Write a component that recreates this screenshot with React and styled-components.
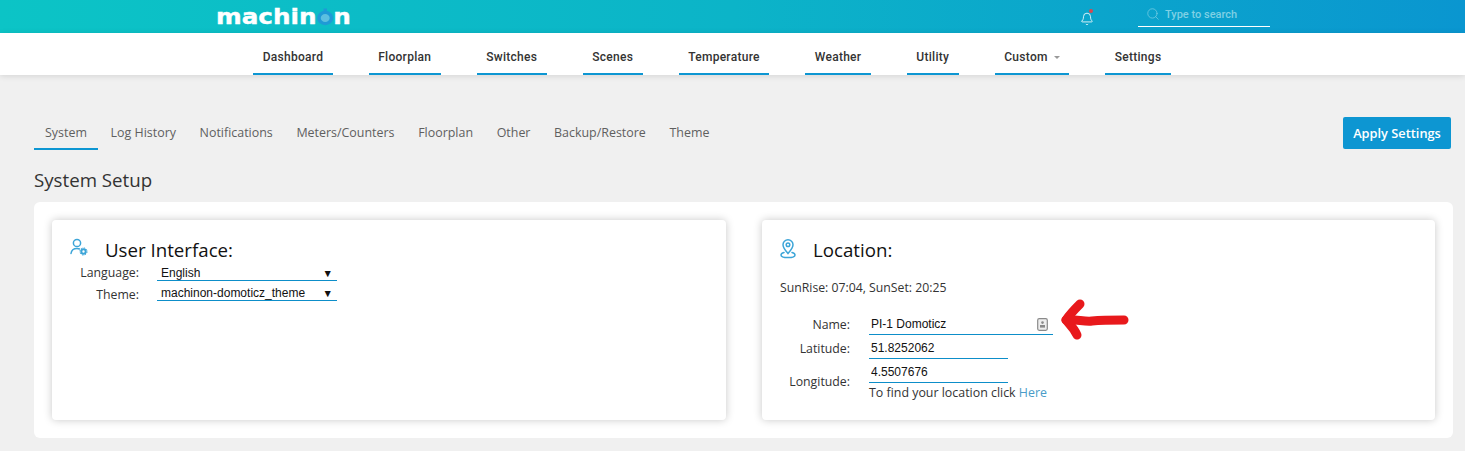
import React from 'react';
import styled, { createGlobalStyle } from 'styled-components';
import { Bell, Search } from 'lucide-react';

const GlobalStyle = createGlobalStyle`
  html, body {
    margin: 0;
    padding: 0;
    background: #f0f0f0;
    font-family: "Open Sans", sans-serif;
  }
`;

const Header = styled.header`
  height: 33px;
  display: flex;
  align-items: center;
  padding-left: 217px;
  background: linear-gradient(90deg, #0cc4c6 0%, #0cb4c8 50%, #0a96d0 100%);
`;

const Logo = styled.div`
  width: 135px;
  display: flex;
  align-items: center;
  height: 33px;
  margin-left: -1px;
  margin-right: 1px;
  color: #fff;
  font-family: "DejaVu Sans", sans-serif;
  font-weight: 700;
  font-size: 22px;
  line-height: 33px;
  -webkit-text-stroke: 0.4px #fff;
  transform: scaleX(1.12);
  transform-origin: left center;
`;

const LogoRing = styled.svg`
  width: 15px;
  height: 22px;
  flex: none;
`;

const BellWrap = styled.div`
  position: relative;
  width: 14px;
  height: 16px;
  margin-left: 728px;
  color: #fff;
  margin-top: 1px;
`;

const BellDot = styled.span`
  position: absolute;
  top: 0;
  right: 1px;
  width: 4px;
  height: 4px;
  border-radius: 50%;
  background: #d9484f;
`;

const SearchBox = styled.div`
  width: 132px;
  height: 27px;
  margin-left: 44px;
  box-sizing: border-box;
  padding: 2px 0 0 8px;
  display: flex;
  align-items: center;
  gap: 5px;
  border-bottom: 1px solid #fff;
  align-self: flex-start;
  color: #7fd0e4;
  font-family: "Roboto", sans-serif;
  font-size: 11px;
  font-weight: 500;
`;

const Nav = styled.nav`
  height: 42px;
  background: #fff;
  box-shadow: 0 1px 6px rgba(0, 0, 0, 0.12);
  display: flex;
  justify-content: center;
  gap: 36px;
  box-sizing: border-box;
  padding-right: 41px;
`;

const NavItem = styled.a`
  box-sizing: border-box;
  height: 42px;
  padding: 17px 9.5px 0;
  border-bottom: 2px solid #0d96d2;
  color: #333;
  font-family: "Roboto", sans-serif;
  font-weight: 500;
  font-size: 12px;
  letter-spacing: 0.28px;
  white-space: nowrap;
`;

const Caret = styled.span`
  display: inline-block;
  margin-left: 6px;
  vertical-align: 2px;
  border-left: 3.5px solid transparent;
  border-right: 3.5px solid transparent;
  border-top: 3px solid #999;
`;

const Main = styled.main`
  padding: 42px 12px 13px 34px;
`;

const TabBar = styled.div`
  display: flex;
  align-items: flex-start;
  height: 33px;
  padding-right: 2px;
`;

const Tab = styled.a`
  box-sizing: border-box;
  height: 33px;
  padding: 7px 11px 0;
  margin-right: 1.6px;
  font-size: 12.45px;
  font-weight: 500;
  color: #5f5f5f;
  white-space: nowrap;
  border-bottom: 2px solid ${props => (props.$active ? '#0d96d2' : 'transparent')};
`;

const ApplyButton = styled.button`
  margin-left: auto;
  width: 108px;
  height: 32px;
  border: 0;
  border-radius: 2px;
  background: #0d96d2;
  color: #fff;
  font-family: "Open Sans", sans-serif;
  font-size: 12.8px;
  font-weight: 600;
`;

const PageTitle = styled.h2`
  margin: 18px 0 10px;
  font-size: 18.7px;
  line-height: 24px;
  font-weight: 400;
  color: #333;
`;

const Panel = styled.section`
  background: #fff;
  border-radius: 6px;
  padding: 18px;
  display: grid;
  grid-template-columns: 674px 673px;
  column-gap: 36px;
`;

const Card = styled.div`
  height: 200px;
  box-sizing: border-box;
  background: #fff;
  border-radius: 4px;
  box-shadow: 0 0 8px rgba(0, 0, 0, 0.22);
  padding: 18px 18px 0;
`;

const CardHead = styled.div`
  display: flex;
  align-items: flex-start;
  height: ${props => props.$height}px;
`;

const CardIcon = styled.svg`
  flex: none;
  width: ${props => props.$width}px;
  height: 22px;
  color: #3da5d8;
`;

const CardTitle = styled.h3`
  margin: 0 0 0 17px;
  font-size: 18.7px;
  line-height: 24px;
  font-weight: 400;
  color: #111;
`;

const FieldRow = styled.div`
  display: flex;
  align-items: flex-end;
  height: ${props => props.$height}px;
  position: relative;
`;

const FieldLabel = styled.label`
  width: ${props => props.$width}px;
  margin-bottom: ${props => -(props.$drop || 0)}px;
  text-align: right;
  flex: none;
  font-size: 12.3px;
  line-height: 17px;
  color: #333;
`;

const SelectBox = styled.div`
  box-sizing: border-box;
  width: 180px;
  height: 17px;
  margin-left: 18px;
  padding: 2px 4px 0 4px;
  display: flex;
  justify-content: space-between;
  align-items: center;
  border-bottom: 1px solid #0d8ec9;
  font-family: "Liberation Sans", sans-serif;
  font-size: 12px;
  color: #111;
`;

const Arrow = styled.span`
  font-size: 10.5px;
  color: #111;
`;

const SunLine = styled.p`
  margin: 0 0 19px;
  font-size: 12.25px;
  line-height: 17px;
  color: #333;
`;

const TextField = styled.div`
  box-sizing: border-box;
  width: ${props => props.$width}px;
  height: 20px;
  margin-left: 19px;
  padding: 0 5px 1px 2px;
  display: flex;
  justify-content: space-between;
  align-items: center;
  border-bottom: 1px solid #0d8ec9;
  font-family: "Liberation Sans", sans-serif;
  font-size: 12px;
  color: #111;
`;

const FieldInput = styled.input`
  flex: 1;
  min-width: 0;
  border: 0;
  padding: 0;
  background: transparent;
  font: inherit;
  color: inherit;
  outline: none;
`;

const Hint = styled.div`
  margin: 1px 0 0 89px;
  font-size: 12.4px;
  line-height: 18px;
  color: #333;
`;

const HintLink = styled.a`
  color: #4a9cc8;
`;

const RedArrow = styled.svg`
  position: absolute;
  left: 280px;
  top: -20px;
  width: 80px;
  height: 50px;
`;

const navItems = ['Dashboard', 'Floorplan', 'Switches', 'Scenes', 'Temperature', 'Weather', 'Utility'];
const tabs = ['Log History', 'Notifications', 'Meters/Counters', 'Floorplan', 'Other', 'Backup/Restore', 'Theme'];

const App = () => {
  return (
    <>
      <GlobalStyle />
      <Header>
        <Logo>
          machin
          <LogoRing viewBox="0 0 15 22">
            <circle cx="7.5" cy="12" r="5.6" fill="#5cc0e0" stroke="#1f9ad6" strokeWidth="3.2" />
            <rect x="6" y="2.5" width="3" height="2.5" fill="#1f9ad6" />
          </LogoRing>
          n
        </Logo>
        <BellWrap>
          <Bell size={14} strokeWidth={1.4} />
          <BellDot />
        </BellWrap>
        <SearchBox>
          <Search size={14} strokeWidth={1.2} />
          Type to search
        </SearchBox>
      </Header>

      <Nav>
        {navItems.map(item => (
          <NavItem key={item}>{item}</NavItem>
        ))}
        <NavItem>
          Custom
          <Caret />
        </NavItem>
        <NavItem>Settings</NavItem>
      </Nav>

      <Main>
        <TabBar>
          <Tab $active>System</Tab>
          {tabs.map(tab => (
            <Tab key={tab}>{tab}</Tab>
          ))}
          <ApplyButton>Apply Settings</ApplyButton>
        </TabBar>

        <PageTitle>System Setup</PageTitle>

        <Panel>
          <Card>
            <CardHead $height={25}>
              <CardIcon $width={18} viewBox="0 0 18 22" fill="none" stroke="currentColor" strokeWidth="1.5">
                <circle cx="7" cy="5" r="3.6" />
                <path d="M1 15.5c.4-3.2 2.6-5 6-5 1 0 1.8.1 2.5.5" strokeLinecap="round" />
                <circle cx="13.5" cy="13.5" r="2.2" strokeWidth="2" />
                <circle cx="13.5" cy="13.5" r="3.6" strokeWidth="1" strokeDasharray="1.4 1.4" />
              </CardIcon>
              <CardTitle>User Interface:</CardTitle>
            </CardHead>
            <FieldRow $height={18}>
              <FieldLabel $width={69}>Language:</FieldLabel>
              <SelectBox>
                English
                <Arrow>▼</Arrow>
              </SelectBox>
            </FieldRow>
            <FieldRow $height={20}>
              <FieldLabel $width={69} $drop={2}>Theme:</FieldLabel>
              <SelectBox>
                machinon-domoticz_theme
                <Arrow>▼</Arrow>
              </SelectBox>
            </FieldRow>
          </Card>

          <Card>
            <CardHead $height={41}>
              <CardIcon $width={16} viewBox="0 0 16 22" fill="none" stroke="currentColor" strokeWidth="1.5">
                <path d="M8 15.5C5.5 12.6 3 10 3 6.8a5 5 0 0 1 10 0c0 3.2-2.5 5.8-5 8.7z" />
                <circle cx="8" cy="6.8" r="1.8" />
                <path d="M4 14.5c-1.8.5-3 1.4-3 2.5 0 1.4 3 2.6 7 2.6s7-1.2 7-2.6c0-1.1-1.2-2-3-2.5" strokeLinecap="round" />
              </CardIcon>
              <CardTitle>Location:</CardTitle>
            </CardHead>
            <SunLine>SunRise: 07:04, SunSet: 20:25</SunLine>
            <FieldRow $height={20}>
              <FieldLabel $width={70} $drop={-2}>Name:</FieldLabel>
              <TextField $width={184}>
                <FieldInput defaultValue="PI-1 Domoticz" />
                <svg width="11" height="13" viewBox="0 0 11 13">
                  <rect x="0.7" y="0.7" width="9.6" height="11.6" rx="1.5" fill="#eee" stroke="#8a8a8a" strokeWidth="1.2" />
                  <circle cx="5.5" cy="4.6" r="1.3" fill="#8a8a8a" />
                  <rect x="3" y="7" width="5" height="2.6" fill="#8a8a8a" />
                </svg>
              </TextField>
              <RedArrow viewBox="0 0 80 50" fill="none" stroke="#e8191c" strokeWidth="9" strokeLinecap="round" strokeLinejoin="round">
                <path d="M20 9C15 14 10 19 6 25c4 5 8 8 11 15" />
                <path d="M6 25c9-1 19 2 26 1 10-1 20-1 32-1" />
              </RedArrow>
            </FieldRow>
            <FieldRow $height={24}>
              <FieldLabel $width={70} $drop={-2}>Latitude:</FieldLabel>
              <TextField $width={139}>
                <FieldInput defaultValue="51.8252062" />
              </TextField>
            </FieldRow>
            <FieldRow $height={24}>
              <FieldLabel $width={70} $drop={7}>Longitude:</FieldLabel>
              <TextField $width={139}>
                <FieldInput defaultValue="4.5507676" />
              </TextField>
            </FieldRow>
            <Hint>
              To find your location click <HintLink>Here</HintLink>
            </Hint>
          </Card>
        </Panel>
      </Main>
    </>
  );
};

export default App;
